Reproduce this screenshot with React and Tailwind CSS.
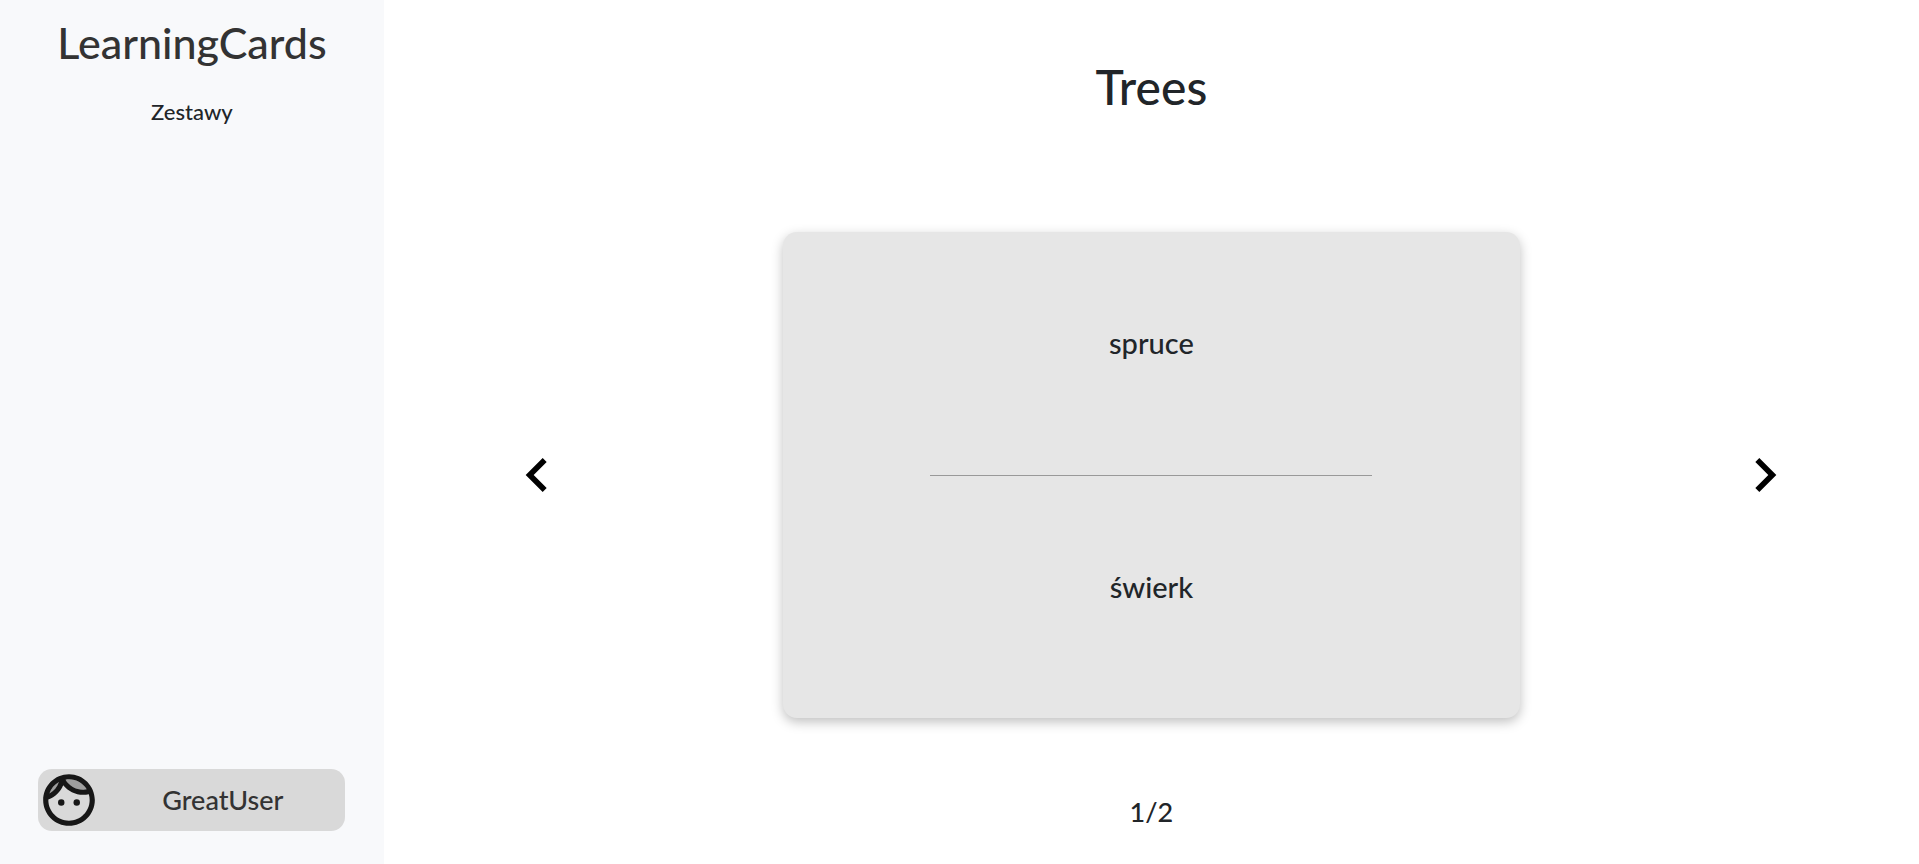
import { MdNavigateBefore, MdNavigateNext } from "react-icons/md";

function FaceIcon({ className }) {
  return (
    <svg viewBox="0 0 24 24" fill="currentColor" className={className} aria-hidden="true">
      <path
        opacity=".3"
        d="M17.5 8c.46 0 .91-.05 1.34-.12C17.44 5.56 14.9 4 12 4c-.46 0-.91.05-1.34.12C12.06 6.44 14.6 8 17.5 8zM8.08 5.03C6.37 6 5.05 7.58 4.42 9.47c1.71-.97 3.03-2.55 3.66-4.44z"
      />
      <path d="M12 2C6.48 2 2 6.48 2 12s4.48 10 10 10 10-4.48 10-10S17.52 2 12 2zm0 2c2.9 0 5.44 1.56 6.84 3.88-.43.07-.88.12-1.34.12-2.9 0-5.44-1.56-6.84-3.88.43-.07.88-.12 1.34-.12zM8.08 5.03C7.45 6.92 6.13 8.5 4.42 9.47 5.05 7.58 6.37 6 8.08 5.03zM12 20c-4.41 0-8-3.59-8-8 0-.05.01-.1.01-.15 2.6-.98 4.68-2.99 5.74-5.55 1.83 2.26 4.62 3.7 7.75 3.7.75 0 1.47-.09 2.17-.24.21.71.33 1.46.33 2.24 0 4.41-3.59 8-8 8z" />
      <circle cx="9" cy="13" r="1.25" />
      <circle cx="15" cy="13" r="1.25" />
    </svg>
  );
}

function Sidebar() {
  return (
    <aside className="flex w-1/5 shrink-0 flex-col items-center bg-[#f8f9fb]">
      <h1 className="pt-[18px] text-[43px] leading-[50px] text-[#333333]">LearningCards</h1>
      <nav className="mt-[26px]">
        <a href="#sets" className="text-[22px] leading-9">
          Zestawy
        </a>
      </nav>
      <button
        type="button"
        className="mt-auto mb-[33px] flex w-4/5 items-center rounded-[14px] bg-[#d9d9d9] text-[#333333]"
      >
        <FaceIcon className="size-[62px] shrink-0 text-[#171717]" />
        <span className="flex-1 text-center text-[27px] leading-9">GreatUser</span>
      </button>
    </aside>
  );
}

function Card({ front, back }) {
  return (
    <article className="flex h-[56.25vh] w-4/5 flex-col items-center rounded-[14px] bg-[#e6e6e6] text-[29px] leading-9 shadow-[0_4px_12px_rgba(0,0,0,0.25)]">
      <p className="flex flex-1 items-center pb-5">{front}</p>
      <hr className="w-3/5 border-[#999999]" />
      <p className="flex flex-1 items-center pb-5">{back}</p>
    </article>
  );
}

export default function App() {
  return (
    <div className="flex min-h-screen bg-white font-['Lato',sans-serif] font-medium text-[#212529]">
      <Sidebar />
      <main className="grid flex-1 grid-rows-[2fr_7fr_1fr]">
        <h2 className="flex items-center justify-center pt-0.5 text-[48px] leading-[58px]">Trees</h2>
        <div className="grid grid-cols-[1fr_3fr_1fr] items-center justify-items-center">
          <button type="button" aria-label="Previous card" className="text-black">
            <MdNavigateBefore className="size-[68px]" />
          </button>
          <Card front="spruce" back="świerk" />
          <button type="button" aria-label="Next card" className="text-black">
            <MdNavigateNext className="size-[68px]" />
          </button>
        </div>
        <p className="pt-4 text-center text-[27px] leading-9">1/2</p>
      </main>
    </div>
  );
}
